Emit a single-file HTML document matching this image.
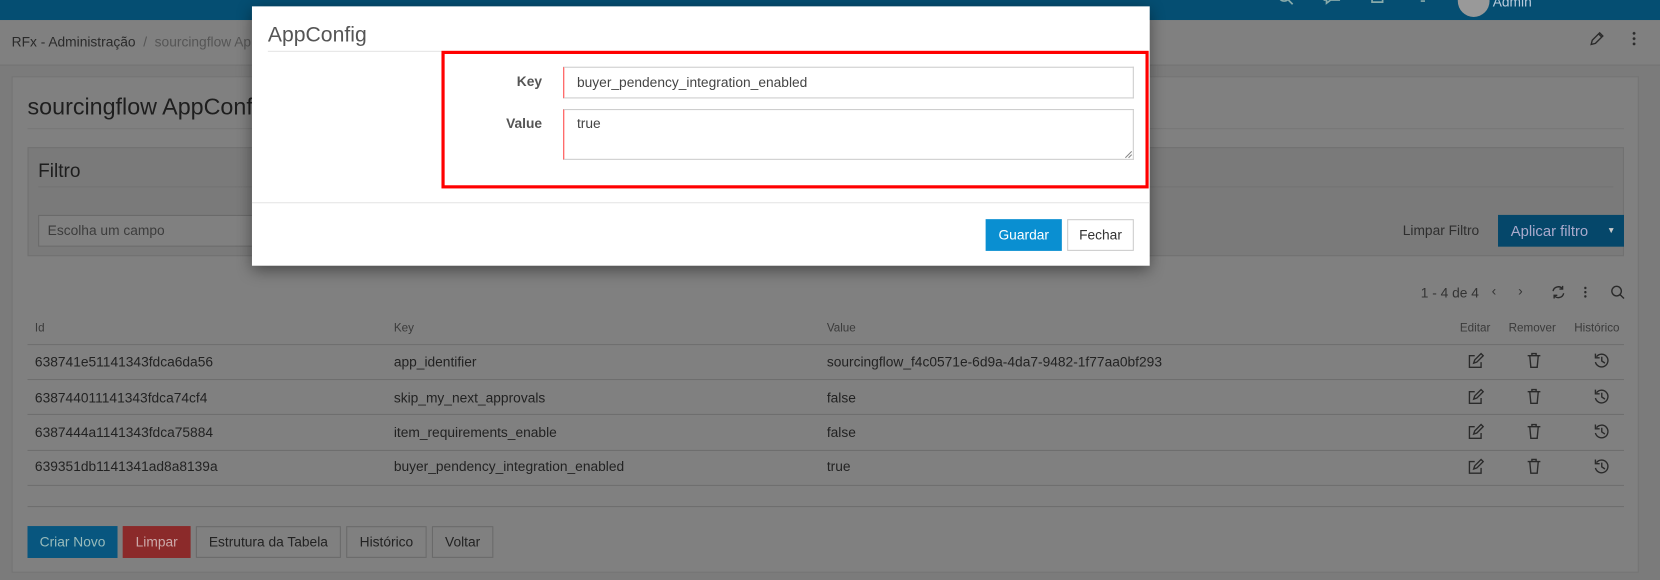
<!DOCTYPE html>
<html><head><meta charset="utf-8"><style>
*{box-sizing:border-box;margin:0;padding:0}
html,body{width:1660px;height:580px;overflow:hidden;background:#7b7b7b;font-family:"Liberation Sans",sans-serif}
#w{position:absolute;left:0;top:0;width:1568px;height:548px;transform:scale(1.05867);transform-origin:0 0}
.a{position:absolute;white-space:nowrap}
.t{font-size:13px;color:#222}
.h{font-size:11px;color:#3a3a3a}
.ln{position:absolute;height:1px;background:#6e6e6e}
.btn{position:absolute;height:30px;line-height:28px;font-size:13px;text-align:center;border:1px solid #6a6a6a;color:#222;background:#808080}
svg{position:absolute}
</style></head><body><div id="w">
<div class="a" style="left:0;top:0;width:1568px;height:19px;background:#054e72"></div>
<div class="a" style="left:0;top:19px;width:1568px;height:42px;background:#808080"></div>
<div class="ln" style="left:0;top:61px;width:1568px;background:#737373"></div>
<div class="a t" style="left:11px;top:32px;font-size:13px;color:#2a2a2a">RFx - Administração <span style="color:#555">&nbsp;/&nbsp; sourcingflow AppConfig</span></div>
<svg style="left:1500px;top:29px" width="16" height="16" viewBox="0 0 16 16"><path d="M3 13l1-4 7-7 3 3-7 7z M10 3l3 3" fill="none" stroke="#2a2a2a" stroke-width="1.3"/></svg>
<div class="a" style="left:1542px;top:29px;width:3px;height:14px;background:radial-gradient(circle,#2a2a2a 1.2px,transparent 1.5px) 0 0/3px 5px"></div>
<!-- header icons -->
<svg style="left:1205px;top:-6px" width="160" height="14" viewBox="0 0 160 14" fill="none" stroke="#8aa" stroke-width="1.6">
<circle cx="8" cy="2" r="5"/><path d="M12 6l4 4"/>
<path d="M46 -2h14v8h-8l-4 3v-3h-2z"/>
<path d="M91 -2v10h10v-10"/><path d="M94 4h4"/>
<path d="M134 -2v5l-2 2h14l-2-2v-5M137 7h4"/>
</svg>
<div class="a" style="left:1377px;top:-14px;width:30px;height:30px;border-radius:50%;background:#999"></div>
<div class="a" style="left:1410px;top:-6px;font-size:13px;color:#bcd">Admin</div>
<!-- card -->
<div class="a" style="left:11px;top:72px;width:1537px;height:469px;background:#808080;border:1px solid #747474"></div>
<div class="a" style="left:26px;top:88px;font-size:22px;color:#1e1e1e">sourcingflow AppConfig</div>
<div class="ln" style="left:26px;top:121px;width:1508px;background:#777"></div>
<div class="a" style="left:26px;top:139px;width:1508px;height:103px;background:#7a7a7a;border:1px solid #717171"></div>
<div class="a" style="left:36px;top:151px;font-size:18px;color:#1e1e1e">Filtro</div>
<div class="ln" style="left:36px;top:176px;width:1488px;background:#737373"></div>
<div class="a" style="left:36px;top:203px;width:400px;height:30px;background:#808080;border:1px solid #6a6a6a"></div>
<div class="a t" style="left:45px;top:210px;color:#3c3c3c">Escolha um campo</div>
<div class="a t" style="left:1325px;top:210px;color:#2e2e2e">Limpar Filtro</div>
<div class="a" style="left:1415px;top:203px;width:119px;height:30px;background:#05476a;color:#aac;font-size:14px;line-height:30px;padding-left:12px">Aplicar filtro <span style="position:absolute;left:103px;font-size:8px;color:#ccc">▼</span></div>
<div class="a t" style="left:1342px;top:269px;color:#333">1 - 4 de 4</div>
<div class="a t" style="left:1409px;top:267px;color:#333">‹</div><div class="a t" style="left:1434px;top:267px;color:#333">›</div>
<svg style="left:1465px;top:269px" width="14" height="14" viewBox="0 0 14 14"><path d="M2 6a5 5 0 0 1 9-2M12 8a5 5 0 0 1-9 2M11 1v3H8M3 13v-3h3" fill="none" stroke="#2a2a2a" stroke-width="1.3"/></svg>
<div class="a" style="left:1496px;top:270px;width:3px;height:12px;background:radial-gradient(circle,#2a2a2a 1px,transparent 1.3px) 0 0/3px 4px"></div>
<svg style="left:1521px;top:269px" width="14" height="14" viewBox="0 0 14 14"><circle cx="6" cy="6" r="4.5" fill="none" stroke="#2a2a2a" stroke-width="1.3"/><path d="M9.5 9.5l3.5 3.5" stroke="#2a2a2a" stroke-width="1.3"/></svg>
<div class="a h" style="left:33px;top:304px">Id</div>
<div class="a h" style="left:372px;top:304px">Key</div>
<div class="a h" style="left:781px;top:304px">Value</div>
<div class="a h" style="left:1379px;top:304px">Editar</div>
<div class="a h" style="left:1425px;top:304px">Remover</div>
<div class="a h" style="left:1487px;top:304px">Histórico</div>
<div class="ln" style="left:26px;top:325px;width:1508px"></div>
<div class="ln" style="left:26px;top:358px;width:1508px"></div>
<div class="ln" style="left:26px;top:391px;width:1508px"></div>
<div class="ln" style="left:26px;top:425px;width:1508px"></div>
<div class="ln" style="left:26px;top:458px;width:1508px"></div>
<div class="ln" style="left:26px;top:478px;width:1508px"></div>
<div class="a t" style="left:33px;top:334px">638741e51141343fdca6da56</div><div class="a t" style="left:372px;top:334px">app_identifier</div><div class="a t" style="left:781px;top:334px">sourcingflow_f4c0571e-6d9a-4da7-9482-1f77aa0bf293</div>
<div class="a t" style="left:33px;top:368px">638744011141343fdca74cf4</div><div class="a t" style="left:372px;top:368px">skip_my_next_approvals</div><div class="a t" style="left:781px;top:368px">false</div>
<div class="a t" style="left:33px;top:401px">6387444a1141343fdca75884</div><div class="a t" style="left:372px;top:401px">item_requirements_enable</div><div class="a t" style="left:781px;top:401px">false</div>
<div class="a t" style="left:33px;top:433px">639351db1141341ad8a8139a</div><div class="a t" style="left:372px;top:433px">buyer_pendency_integration_enabled</div><div class="a t" style="left:781px;top:433px">true</div>
<svg style="left:1386px;top:333px" width="16" height="120" viewBox="0 0 16 120">
<g id="r" fill="none" stroke="#2a2a2a" stroke-width="1.3"><path d="M7 3H2v11h11V9"/><path d="M6 10l1-3 6-6 2 2-6 6z"/></g>
<use href="#r" y="34"/><use href="#r" y="67"/><use href="#r" y="100"/></svg>
<svg style="left:1442px;top:333px" width="14" height="120" viewBox="0 0 14 120">
<g id="d" fill="none" stroke="#2a2a2a" stroke-width="1.3"><path d="M1 3h12M5 3V1h4v2M3 3l1 11h6l1-11"/></g>
<use href="#d" y="34"/><use href="#d" y="67"/><use href="#d" y="100"/></svg>
<svg style="left:1505px;top:333px" width="16" height="120" viewBox="0 0 16 120">
<g id="hh" fill="none" stroke="#2a2a2a" stroke-width="1.3"><path d="M3 4a6 6 0 1 1-1 5"/><path d="M2 1v4h4"/><path d="M8 4v4l3 2"/></g>
<use href="#hh" y="34"/><use href="#hh" y="67"/><use href="#hh" y="100"/></svg>
<div class="btn" style="left:26px;top:497px;width:85px;background:#08567f;border-color:#08567f;color:#9bb">Criar Novo</div>
<div class="btn" style="left:116px;top:497px;width:64px;background:#8b2a2a;border-color:#8b2a2a;color:#caa">Limpar</div>
<div class="btn" style="left:185px;top:497px;width:137px">Estrutura da Tabela</div>
<div class="btn" style="left:327px;top:497px;width:76px">Histórico</div>
<div class="btn" style="left:408px;top:497px;width:58px">Voltar</div>
<!-- modal -->
<div class="a" style="left:238px;top:6px;width:848px;height:245px;background:#fff;box-shadow:0 4px 14px rgba(0,0,0,.45)"></div>
<div class="a" style="left:253px;top:22px;font-size:20px;color:#555">AppConfig</div>
<div class="a" style="left:253px;top:48px;width:818px;height:1px;background:#e5e5e5"></div>
<div class="a" style="left:417px;top:48px;width:668px;height:130px;border:3px solid #f00"></div>
<div class="a" style="left:440px;top:69px;width:72px;text-align:right;font-size:13px;font-weight:bold;color:#555">Key</div>
<div class="a" style="left:532px;top:63px;width:539px;height:30px;border:1px solid #ccc;border-left:1px solid #f44"></div>
<div class="a" style="left:545px;top:70px;font-size:13px;color:#444">buyer_pendency_integration_enabled</div>
<div class="a" style="left:440px;top:109px;width:72px;text-align:right;font-size:13px;font-weight:bold;color:#555">Value</div>
<div class="a" style="left:532px;top:103px;width:539px;height:48px;border:1px solid #ccc;border-left:1px solid #f44"></div>
<div class="a" style="left:545px;top:109px;font-size:13px;color:#444">true</div>
<svg style="left:1062px;top:142px" width="8" height="8"><path d="M1 7L7 1M4 7L7 4" stroke="#888"/></svg>
<div class="a" style="left:238px;top:191px;width:848px;height:1px;background:#e5e5e5"></div>
<div class="a" style="left:931px;top:207px;width:72px;height:30px;background:#0a8fd1;color:#fff;font-size:13px;text-align:center;line-height:30px">Guardar</div>
<div class="a" style="left:1008px;top:207px;width:63px;height:30px;border:1px solid #ccc;color:#333;font-size:13px;text-align:center;line-height:28px">Fechar</div>
</div></body></html>
